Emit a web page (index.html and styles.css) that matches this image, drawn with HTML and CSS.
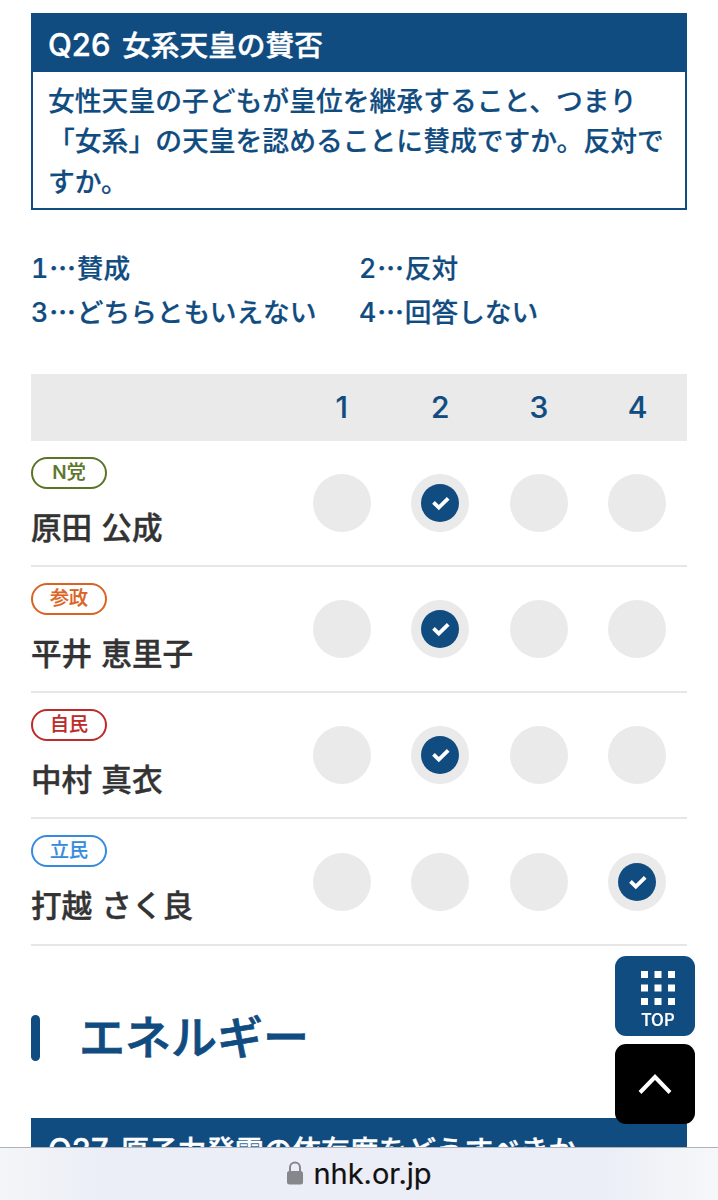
FILE: index.html
```
<!DOCTYPE html>
<html lang="ja">
<head>
  <meta charset="UTF-8">
  <meta name="viewport" content="width=device-width, initial-scale=1.0">
  <title>候補者アンケート</title>
  <link rel="stylesheet" href="styles.css">
</head>
<body>
  <main id="container">
    <section class="question">
      <h3><span class="num">Q26</span> 女系天皇の賛否</h3>
      <p>女性天皇の子どもが皇位を継承すること、つまり「女系」の天皇を認めることに賛成ですか。反対ですか。</p>
    </section>

    <ul class="choices">
      <li>1<span class="dots">…</span>賛成</li>
      <li>2<span class="dots">…</span>反対</li>
      <li>3<span class="dots">…</span>どちらともいえない</li>
      <li>4<span class="dots">…</span>回答しない</li>
    </ul>

    <div class="answers">
      <div class="row head">
        <span></span>
        <span>1</span>
        <span>2</span>
        <span>3</span>
        <span>4</span>
      </div>
      <div class="row">
        <div class="person">
          <span class="party nhk">N党</span>
          <span class="name">原田 公成</span>
        </div>
        <i class="dot"></i>
        <i class="dot"><svg class="check" viewBox="0 0 38 38"><circle cx="19" cy="19" r="19"/><path d="M12.500 18.300l5.300 5.200 9.400-9.200"/></svg></i>
        <i class="dot"></i>
        <i class="dot"></i>
      </div>
      <div class="row">
        <div class="person">
          <span class="party sansei">参政</span>
          <span class="name">平井 恵里子</span>
        </div>
        <i class="dot"></i>
        <i class="dot"><svg class="check" viewBox="0 0 38 38"><circle cx="19" cy="19" r="19"/><path d="M12.500 18.300l5.300 5.200 9.400-9.200"/></svg></i>
        <i class="dot"></i>
        <i class="dot"></i>
      </div>
      <div class="row">
        <div class="person">
          <span class="party jimin">自民</span>
          <span class="name">中村 真衣</span>
        </div>
        <i class="dot"></i>
        <i class="dot"><svg class="check" viewBox="0 0 38 38"><circle cx="19" cy="19" r="19"/><path d="M12.500 18.300l5.300 5.200 9.400-9.200"/></svg></i>
        <i class="dot"></i>
        <i class="dot"></i>
      </div>
      <div class="row">
        <div class="person">
          <span class="party rikken">立民</span>
          <span class="name">打越 さく良</span>
        </div>
        <i class="dot"></i>
        <i class="dot"></i>
        <i class="dot"></i>
        <i class="dot"><svg class="check" viewBox="0 0 38 38"><circle cx="19" cy="19" r="19"/><path d="M12.500 18.300l5.300 5.200 9.400-9.200"/></svg></i>
      </div>
    </div>

    <h2>エネルギー</h2>

    <section class="question next">
      <h3><span class="num">Q27</span> 原子力発電の依存度をどうすべきか</h3>
    </section>
  </main>

  <nav class="float-nav">
    <a class="top-btn">
      <svg width="34" height="34" viewBox="0 0 34 34" fill="#fff">
        <path d="M0 0h7v7H0zM13.500 0h7v7h-7zM27 0h7v7h-7zM0 13.500h7v7H0zM13.500 13.500h7v7h-7zM27 13.500h7v7h-7zM0 27h7v7H0zM13.500 27h7v7h-7zM27 27h7v7h-7z"/>
      </svg>
      <span>TOP</span>
    </a>
    <a class="up-btn">
      <svg width="34" height="22" viewBox="0 0 34 22"><path d="M2 19.500L17 4l15 15.500"/></svg>
    </a>
  </nav>

  <footer class="browser-bar">
    <svg width="18" height="24" viewBox="0 0 18 24">
      <path d="M4 11V6.500a5 5 0 0 1 10 0V11" fill="none" stroke="#86868b" stroke-width="2"/>
      <rect x="1" y="10" width="16" height="13.500" rx="2.500" fill="#86868b"/>
    </svg>
    <span>nhk.or.jp</span>
  </footer>
</body>
</html>
```
FILE: styles.css
```
* {
  box-sizing: border-box;
}
body {
  margin: 0;
  height: 1200px;
  display: flex;
  flex-direction: column;
  overflow: hidden;
  background: #fff;
  color: #333;
  font-family: Inter, "Noto Sans CJK JP", sans-serif;
  font-weight: 500;
  -webkit-text-stroke: 0.2px;
}
#container {
  height: 1147px;
  padding: 13px 31px 0;
  overflow: hidden;
}
h2, h3, p, ul {
  margin: 0;
  padding: 0;
}
.question {
  border: 2px solid #114c81;
  height: 197px;
  color: #114c81;
}
.question h3 {
  height: 57px;
  padding-left: 15px;
  background: #114c81;
  color: #fff;
  font-size: 28.7px;
  font-weight: 500;
  line-height: 61px;
  white-space: nowrap;
  word-spacing: 4px;
  -webkit-text-stroke: 0.4px;
}
.num {
  font-size: 31px;
  line-height: 1;
}
.question p {
  padding: 9px 16px 0 15px;
  font-size: 26.8px;
  line-height: 40.3px;
}
.question.next {
  height: 59px;
}
.choices {
  display: grid;
  grid-template-columns: 328px 328px;
  margin-top: 37px;
  list-style: none;
  color: #114c81;
  font-size: 26.7px;
  line-height: 43px;
  white-space: nowrap;
  font-variant-numeric: tabular-nums;
}
.choices li {
  height: 43.5px;
}
.dots {
  display: inline-block;
  width: 28.500px;
  text-indent: 1px;
  font-family: "Noto Sans CJK JP", sans-serif;
  font-weight: 700;
  line-height: 1;
}
.answers {
  margin-top: 39.5px;
}
.row {
  display: grid;
  grid-template-columns: 261.4px repeat(4, 98.600px);
  align-items: center;
  height: 126.300px;
  border-bottom: 2px solid #e6e6e6;
}
.head {
  height: 67px;
  border: 0;
  background: #eaeaea;
  color: #114c81;
  font-size: 30px;
  text-align: center;
}
.person {
  align-self: start;
  padding-top: 16px;
}
.party {
  display: block;
  width: 76px;
  height: 32px;
  border: 2px solid;
  border-radius: 16px;
  font-size: 19px;
  line-height: 28px;
  text-align: center;
}
.nhk {
  color: #5a7526;
}
.sansei {
  color: #db6321;
}
.jimin {
  color: #bd2c2a;
}
.rikken {
  color: #368bde;
}
.name {
  display: block;
  margin-top: 17px;
  font-size: 30.600px;
  line-height: 44px;
  word-spacing: 1px;
  -webkit-text-stroke: 0.4px;
}
.dot {
  display: flex;
  justify-content: center;
  align-items: center;
  justify-self: center;
  width: 58px;
  height: 58px;
  border-radius: 50%;
  background: #eaeaea;
}
.check {
  width: 38px;
  height: 38px;
  fill: #114c81;
}
.check path {
  fill: none;
  stroke: #fff;
  stroke-width: 3.800;
}
h2 {
  display: flex;
  align-items: center;
  gap: 39px;
  height: 60px;
  margin: 62px 0 50.5px;
  color: #114c81;
  font-size: 46px;
  font-weight: 500;
  line-height: 52px;
  padding-bottom: 2px;
  -webkit-text-stroke: 0.8px;
}
h2::before {
  content: "";
  width: 9px;
  height: 46px;
  margin-top: 2px;
  border-radius: 5px;
  background: #114c81;
}
.float-nav {
  position: fixed;
  right: 23px;
  top: 956px;
  display: flex;
  flex-direction: column;
  gap: 8px;
}
.float-nav a {
  display: flex;
  flex-direction: column;
  align-items: center;
  width: 80px;
  height: 80px;
  border-radius: 11px;
  color: #fff;
}
.float-nav .top-btn {
  padding: 15px 0 0 6px;
  background: #114c81;
  font: 500 17px/24px "Noto Sans CJK JP", sans-serif;
}
.top-btn span {
  margin-top: 2px;
}
.float-nav .up-btn {
  justify-content: center;
  background: #000;
}
.up-btn path {
  fill: none;
  stroke: #fff;
  stroke-width: 4;
}
.browser-bar {
  display: flex;
  justify-content: center;
  gap: 9px;
  height: 53px;
  padding-top: 13px;
  border-top: 1px solid #aeb1b8;
  background: linear-gradient(90deg, #f4f5f8, #ebeef6 14%, #ebeef6 84%, #f6f7f9);
  color: #111;
  font: 400 29px/26px Inter, sans-serif;
}
```
